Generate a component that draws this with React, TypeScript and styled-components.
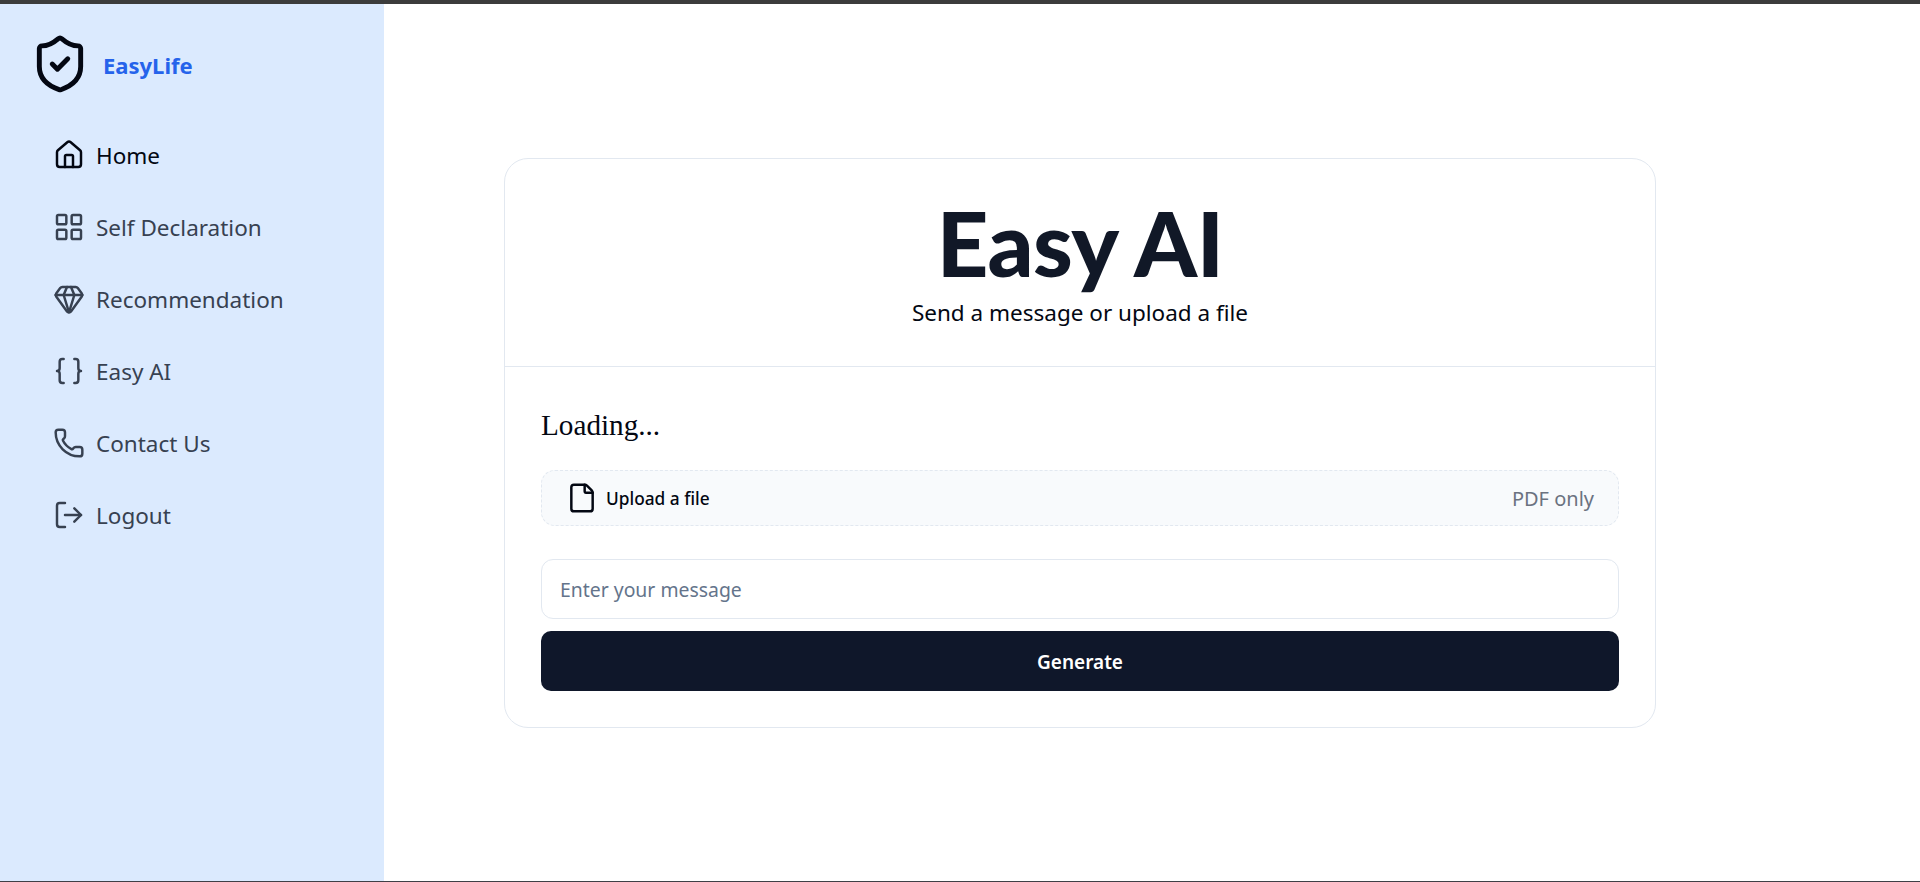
import React from "react";
import styled, { createGlobalStyle } from "styled-components";
import { House, LayoutGrid, Gem, Braces, Phone, LogOut, ShieldCheck, File as FileIcon } from "lucide-react";

const Global = createGlobalStyle`
  html, body { margin: 0; padding: 0; height: 100%; background: #fff; }
  * { box-sizing: border-box; }
  body { font-family: "Noto Sans", "Open Sans", sans-serif; }
`;

const Shell = styled.div`
  height: 882px;
  display: flex;
  border-top: 4px solid #3c3c3c;
  border-bottom: 1px solid #3f3f46;
  overflow: hidden;
`;
const Sidebar = styled.aside`
  width: 384px;
  flex: none;
  background: #dbeafe;
  padding: 20px 0 0 0;
`;
const Brand = styled.div`
  display: flex;
  align-items: center;
  gap: 12px;
  padding-left: 29px;
  height: 80px;
  color: #030712;
`;
const BrandName = styled.span`
  color: #2563eb;
  font-size: 22px;
  font-weight: 700;
  padding-top: 1px;
`;
const Nav = styled.nav`
  display: flex;
  flex-direction: column;
  padding: 15px 0 0 53px;
`;
const NavItem = styled.a<{ $active?: boolean }>`
  display: flex;
  align-items: center;
  gap: 11px;
  height: 72px;
  font-size: 22.5px;
  color: ${(p) => (p.$active ? "#030712" : "#374151")};
`;
const Main = styled.main`
  flex: 1;
  padding: 154px 0 0 120px;
`;
const Card = styled.section`
  width: 1152px;
  height: 570px;
  border: 1.5px solid #e2e8f0;
  border-radius: 24px;
  background: #fff;
`;
const CardHeader = styled.header`
  height: 208px;
  border-bottom: 1.5px solid #e2e8f0;
  display: flex;
  flex-direction: column;
  align-items: center;
  padding-top: 33px;
`;
const Title = styled.h1`
  margin: 0;
  font-family: "Lato", "Noto Sans", sans-serif;
  font-size: 90px;
  line-height: 100px;
  font-weight: 900;
  letter-spacing: -0.6px;
  color: #111827;
`;
const Subtitle = styled.p`
  margin: 6px 0 0;
  font-size: 22.5px;
  line-height: 30px;
  color: #030712;
`;
const CardBody = styled.div`
  padding: 38px 36px 0;
  display: flex;
  flex-direction: column;
`;
const Status = styled.div`
  font-family: "Liberation Serif", serif;
  font-size: 29.2px;
  line-height: 40px;
  color: #030712;
`;
const Upload = styled.label`
  margin-top: 25px;
  height: 56px;
  display: flex;
  align-items: center;
  justify-content: space-between;
  padding: 0 24px 0 24px;
  background: #f8fafc;
  border: 1px dashed #e2e8f0;
  border-radius: 14px;
`;
const UploadLabel = styled.span`
  display: flex;
  align-items: center;
  gap: 8px;
  font-size: 17.3px;
  font-weight: 500;
  color: #030712;
`;
const UploadHint = styled.span`
  font-size: 20px;
  color: #6b7280;
`;
const MessageInput = styled.input`
  margin-top: 33px;
  height: 60px;
  width: 100%;
  padding: 1px 18px 0;
  font: inherit;
  font-size: 19.4px;
  border: 1.5px solid #e2e8f0;
  border-radius: 12px;
  outline: none;
  &::placeholder { color: #64748b; opacity: 1; }
`;
const Generate = styled.button`
  margin-top: 12px;
  height: 60px;
  width: 100%;
  padding: 2px 0 0;
  border: 0;
  border-radius: 10px;
  background: #0f172a;
  color: #fff;
  font: inherit;
  font-size: 19px;
  font-weight: 600;
`;

const items = [
  { label: "Home", Icon: House, active: true },
  { label: "Self Declaration", Icon: LayoutGrid },
  { label: "Recommendation", Icon: Gem },
  { label: "Easy AI", Icon: Braces },
  { label: "Contact Us", Icon: Phone },
  { label: "Logout", Icon: LogOut },
];

export default function App() {
  return (
    <>
      <Global />
      <Shell>
        <Sidebar>
          <Brand>
            <ShieldCheck size={62} strokeWidth={1.9} />
            <BrandName>EasyLife</BrandName>
          </Brand>
          <Nav>
            {items.map(({ label, Icon, active }) => (
              <NavItem key={label} $active={active}>
                <Icon size={32} strokeWidth={1.85} />
                {label}
              </NavItem>
            ))}
          </Nav>
        </Sidebar>
        <Main>
          <Card>
            <CardHeader>
              <Title>Easy AI</Title>
              <Subtitle>Send a message or upload a file</Subtitle>
            </CardHeader>
            <CardBody>
              <Status>Loading...</Status>
              <Upload>
                <UploadLabel>
                  <FileIcon size={32} strokeWidth={1.85} />
                  Upload a file
                </UploadLabel>
                <UploadHint>PDF only</UploadHint>
              </Upload>
              <MessageInput placeholder="Enter your message" />
              <Generate>Generate</Generate>
            </CardBody>
          </Card>
        </Main>
      </Shell>
    </>
  );
}
